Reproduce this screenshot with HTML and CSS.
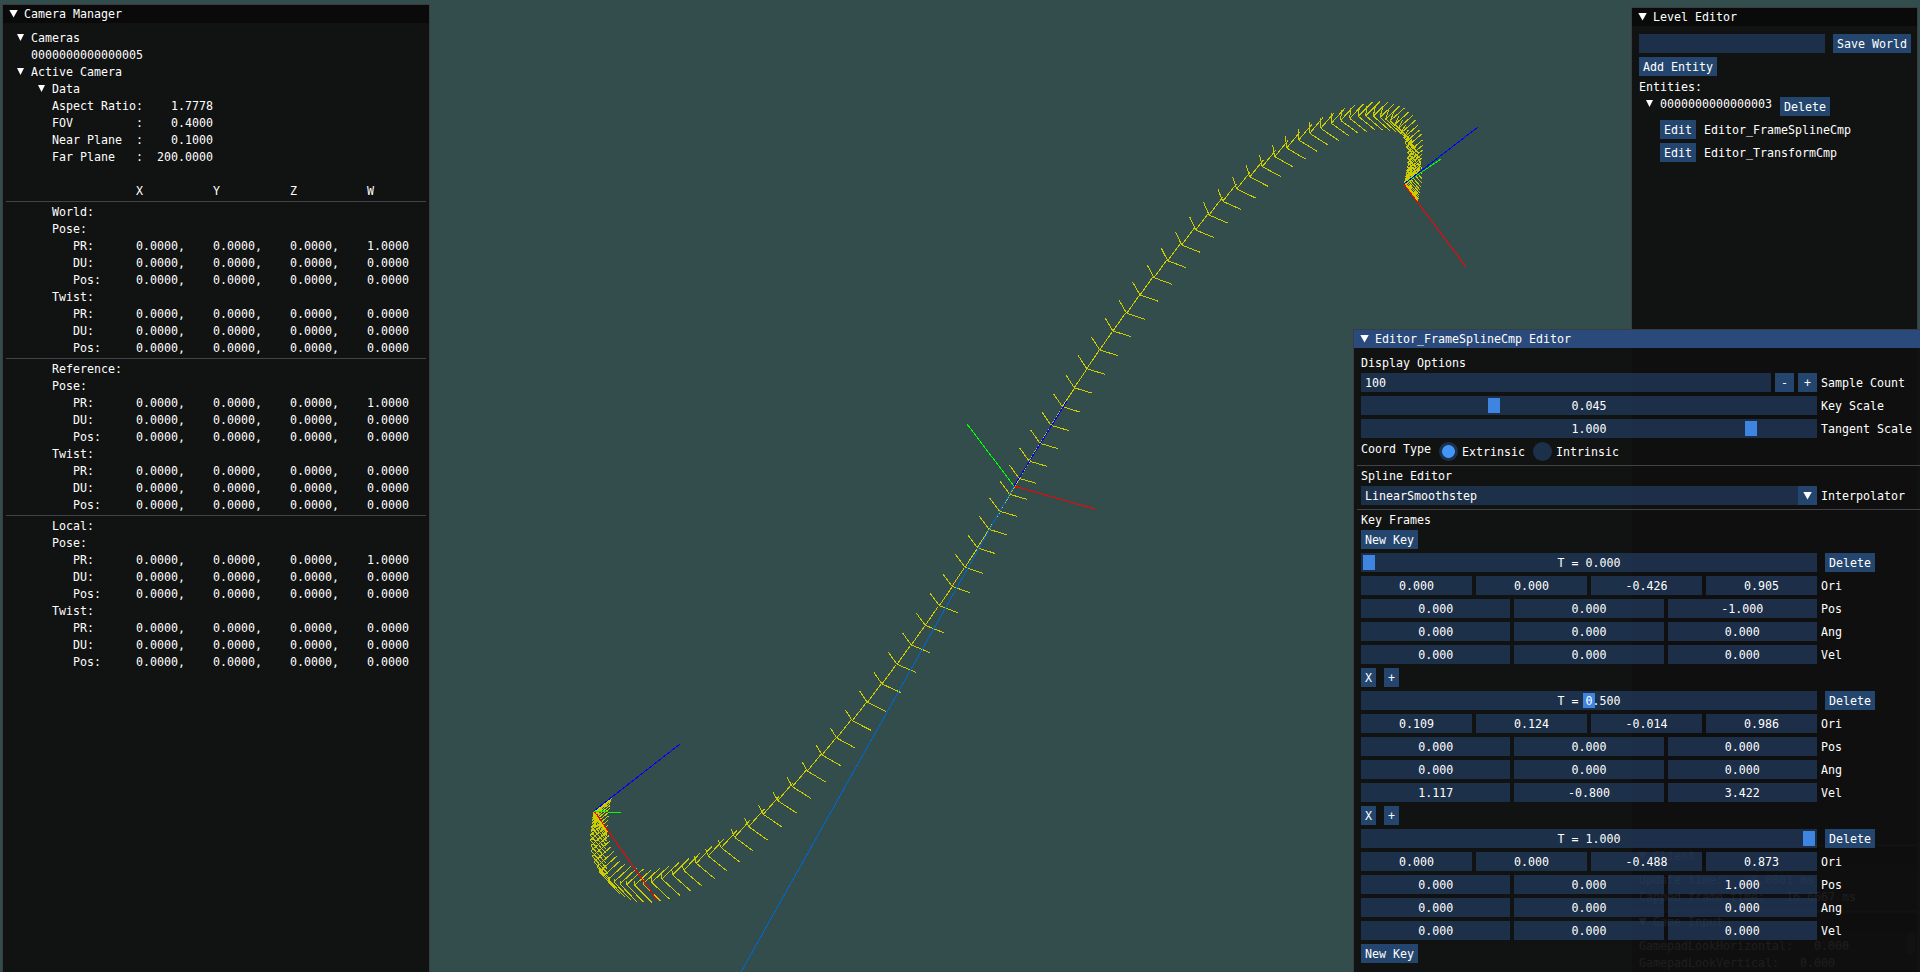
FILE: index.html
```
<!DOCTYPE html>
<html lang="en">
<head>
<meta charset="utf-8">
<title>Spline Editor</title>
<link rel="stylesheet" href="styles.css">
</head>
<body>
<svg class="viewport" width="1920" height="972" viewBox="0 0 1920 972">
  <path id="samples" class="line yellow"/>
  <path class="line guide" d="M1014 486L741 972"/>
  <path class="line red" d="M1014 486L1095 509M1404 184L1466 267M594 811L657 900"/>
  <path class="line green" d="M1014 486L967 424M1404 184L1441 159M594 811.5L621 812.5"/>
  <path class="line blue" d="M1014 486L1067 401M1404 184L1478 127M594 811L680 744"/>
</svg>

<section class="window camera">
  <header class="title"><i class="arrow"></i>Camera Manager</header>
  <div class="body">
    <div class="text tree"><i class="arrow small"></i>Cameras</div>
    <div class="text in1">0000000000000005</div>
    <div class="text tree"><i class="arrow small"></i>Active Camera</div>
    <div class="text tree in1"><i class="arrow small"></i>Data</div>
    <pre class="block in2">Aspect Ratio:    1.7778
FOV         :    0.4000
Near Plane  :    0.1000
Far Plane   :  200.0000

            X          Y          Z          W</pre>
    <hr>
    <pre class="block in2">World:
Pose:
   PR:      0.0000,    0.0000,    0.0000,    1.0000
   DU:      0.0000,    0.0000,    0.0000,    0.0000
   Pos:     0.0000,    0.0000,    0.0000,    0.0000
Twist:
   PR:      0.0000,    0.0000,    0.0000,    0.0000
   DU:      0.0000,    0.0000,    0.0000,    0.0000
   Pos:     0.0000,    0.0000,    0.0000,    0.0000</pre>
    <hr>
    <pre class="block in2">Reference:
Pose:
   PR:      0.0000,    0.0000,    0.0000,    1.0000
   DU:      0.0000,    0.0000,    0.0000,    0.0000
   Pos:     0.0000,    0.0000,    0.0000,    0.0000
Twist:
   PR:      0.0000,    0.0000,    0.0000,    0.0000
   DU:      0.0000,    0.0000,    0.0000,    0.0000
   Pos:     0.0000,    0.0000,    0.0000,    0.0000</pre>
    <hr>
    <pre class="block in2">Local:
Pose:
   PR:      0.0000,    0.0000,    0.0000,    1.0000
   DU:      0.0000,    0.0000,    0.0000,    0.0000
   Pos:     0.0000,    0.0000,    0.0000,    0.0000
Twist:
   PR:      0.0000,    0.0000,    0.0000,    0.0000
   DU:      0.0000,    0.0000,    0.0000,    0.0000
   Pos:     0.0000,    0.0000,    0.0000,    0.0000</pre>
  </div>
</section>

<section class="window level">
  <header class="title"><i class="arrow"></i>Level Editor</header>
  <div class="body">
    <div class="row wide"><span class="frame world-name"></span><span class="button">Save World</span></div>
    <div class="row"><span class="button">Add Entity</span></div>
    <div class="text">Entities:</div>
    <div class="row wide tree top"><i class="arrow small"></i><span class="plain">0000000000000003</span><span class="button">Delete</span></div>
    <div class="row wide in1"><span class="button">Edit</span><span class="label">Editor_FrameSplineCmp</span></div>
    <div class="row wide in1"><span class="button">Edit</span><span class="label">Editor_TransformCmp</span></div>
  </div>
</section>

<section class="window client">
  <header class="title"><i class="arrow"></i>Client</header>
  <div class="body"><pre class="block">Update time:    0.0001 ms
Capped frame time:   16.6667 ms</pre></div>
</section>

<section class="window input">
  <header class="title"><i class="arrow"></i>Game Input</header>
  <div class="body"><pre class="block">GamepadLookHorizontal:   0.000
GamepadLookVertical:   0.000</pre></div>
  <i class="scroll"></i>
</section>

<section class="window editor">
  <header class="title"><i class="arrow"></i>Editor_FrameSplineCmp Editor</header>
  <div class="body">
    <div class="text">Display Options</div>
    <div class="row"><span class="fields"><span class="frame value">100</span><span class="button square">-</span><span class="button square">+</span></span><span class="label">Sample Count</span></div>
    <div class="row"><span class="frame slider"><i class="grab" style="left:127px"></i><b>0.045</b></span><span class="label">Key Scale</span></div>
    <div class="row"><span class="frame slider"><i class="grab" style="left:384px"></i><b>1.000</b></span><span class="label">Tangent Scale</span></div>
    <div class="row top"><span class="plain coord">Coord Type</span><i class="radio on"></i><span class="label option">Extrinsic</span><i class="radio"></i><span class="label">Intrinsic</span></div>
    <hr>
    <div class="text">Spline Editor</div>
    <div class="row"><span class="fields combo"><span class="frame value">LinearSmoothstep</span><span class="button square"><i class="arrow"></i></span></span><span class="label">Interpolator</span></div>
    <hr>
    <div class="text">Key Frames</div>
    <div class="row"><span class="button">New Key</span></div>

    <div class="row wide"><span class="frame slider"><i class="grab" style="left:2px"></i><b>T = 0.000</b></span><span class="button">Delete</span></div>
    <div class="row"><span class="fields"><span class="frame">0.000</span><span class="frame">0.000</span><span class="frame">-0.426</span><span class="frame">0.905</span></span><span class="label">Ori</span></div>
    <div class="row"><span class="fields"><span class="frame">0.000</span><span class="frame">0.000</span><span class="frame">-1.000</span></span><span class="label">Pos</span></div>
    <div class="row"><span class="fields"><span class="frame">0.000</span><span class="frame">0.000</span><span class="frame">0.000</span></span><span class="label">Ang</span></div>
    <div class="row"><span class="fields"><span class="frame">0.000</span><span class="frame">0.000</span><span class="frame">0.000</span></span><span class="label">Vel</span></div>
    <div class="row wide"><span class="button">X</span><span class="button">+</span></div>

    <div class="row wide"><span class="frame slider"><i class="grab" style="left:222px"></i><b>T = 0.500</b></span><span class="button">Delete</span></div>
    <div class="row"><span class="fields"><span class="frame">0.109</span><span class="frame">0.124</span><span class="frame">-0.014</span><span class="frame">0.986</span></span><span class="label">Ori</span></div>
    <div class="row"><span class="fields"><span class="frame">0.000</span><span class="frame">0.000</span><span class="frame">0.000</span></span><span class="label">Pos</span></div>
    <div class="row"><span class="fields"><span class="frame">0.000</span><span class="frame">0.000</span><span class="frame">0.000</span></span><span class="label">Ang</span></div>
    <div class="row"><span class="fields"><span class="frame">1.117</span><span class="frame">-0.800</span><span class="frame">3.422</span></span><span class="label">Vel</span></div>
    <div class="row wide"><span class="button">X</span><span class="button">+</span></div>

    <div class="row wide"><span class="frame slider"><i class="grab" style="left:442px"></i><b>T = 1.000</b></span><span class="button">Delete</span></div>
    <div class="row"><span class="fields"><span class="frame">0.000</span><span class="frame">0.000</span><span class="frame">-0.488</span><span class="frame">0.873</span></span><span class="label">Ori</span></div>
    <div class="row"><span class="fields"><span class="frame">0.000</span><span class="frame">0.000</span><span class="frame">1.000</span></span><span class="label">Pos</span></div>
    <div class="row"><span class="fields"><span class="frame">0.000</span><span class="frame">0.000</span><span class="frame">0.000</span></span><span class="label">Ang</span></div>
    <div class="row"><span class="fields"><span class="frame">0.000</span><span class="frame">0.000</span><span class="frame">0.000</span></span><span class="label">Vel</span></div>
    <div class="row"><span class="button">New Key</span></div>
  </div>
</section>
<script src="spline.js"></script>
</body>
</html>
```
FILE: styles.css
```
* { box-sizing: border-box; }

body {
  margin: 0;
  width: 1920px;
  height: 972px;
  overflow: hidden;
  position: relative;
  background: #334c4c;
  color: #fff;
  font: 11.63px/13px "DejaVu Sans Mono", monospace;
}

.viewport { display: block; }
.line { fill: none; stroke-width: 1; shape-rendering: crispEdges; }
.yellow { stroke: #cccc00; }
.red { stroke: #ff0000; }
.green { stroke: #00ff00; }
.blue { stroke: #0000ff; }
.guide { stroke: #0066cc; }

.window {
  position: absolute;
  display: flex;
  flex-direction: column;
  overflow: hidden;
  background: rgba(15, 15, 15, .94);
  border: 1px solid rgba(110, 110, 128, .45);
  white-space: pre;
}
.camera { left: 2px; top: 4px; width: 428px; height: 980px; }
.level { left: 1631px; top: 7px; width: 287px; height: 838px; }
.client { left: 1631px; top: 846px; width: 287px; height: 65px; }
.input { left: 1631px; top: 912px; width: 287px; height: 80px; }
.editor { left: 1353px; top: 329px; width: 600px; height: 660px; }

.title {
  display: flex;
  flex: none;
  align-items: center;
  gap: 6px;
  height: 18px;
  padding: 0 0 0 6px;
  background: #0a0a0a;
}
.editor .title { background: #294a7a; }

.body {
  display: flex;
  flex: none;
  flex-direction: column;
  gap: 4px;
  padding: 8px 7px;
}

.arrow {
  flex: none;
  width: 9px;
  height: 8px;
  background: #fff;
  clip-path: polygon(0 0, 100% 0, 50% 100%);
}
.arrow.small { width: 7px; height: 7px; }
.title .arrow { margin-bottom: 1px; }

.text { height: 13px; line-height: 15px; }
.block { margin: -1px 0 -3px; font: inherit; line-height: 17px; }
.in1 { margin-left: 21px; }
.in2 { margin-left: 42px; }
.tree { display: flex; align-items: center; gap: 7px; padding-left: 7px; }
.text.tree { align-items: flex-start; }
.text.tree .arrow { margin-top: 3px; }

hr {
  width: auto;
  height: 1px;
  margin: 0 -4px -1px;
  border: 0;
  background: #42424a;
}
.editor hr { margin-right: -8px; }

.row { display: flex; align-items: center; gap: 4px; height: 19px; }
.row.wide { gap: 8px; }
.row.top .plain, .row.top .arrow { align-self: flex-start; }
.row.top .plain { line-height: 15px; }
.row.top .arrow { margin-top: 3px; }
.row.top.tree .plain { margin-left: -1px; }
.label { padding-top: 2px; }

.frame, .button {
  display: flex;
  flex: none;
  align-items: center;
  justify-content: center;
  height: 19px;
  padding: 2px 0 0;
  background: rgba(41, 74, 122, .54);
}
.button { padding: 2px 4px 0; background: #24466e; }
.button.square { width: 19px; padding: 2px 0 0; }
.world-name { width: 186px; }

.fields { display: flex; flex: none; gap: 4px; width: 456px; }
.fields .frame { flex: 1; }
.fields .frame.value { justify-content: flex-start; padding-left: 4px; }
.fields.combo { gap: 0; }
.combo .arrow { margin-bottom: 2px; }

.slider { position: relative; width: 456px; }
.slider b { position: relative; font-weight: normal; }
.grab {
  position: absolute;
  top: 2px;
  width: 12px;
  height: 15px;
  background: #3d85e0;
}

.coord { margin-right: 4px; }
.option { margin-right: 4px; }
.radio {
  flex: none;
  width: 19px;
  height: 19px;
  border-radius: 50%;
  background: #1d3049;
}
.radio.on { background: radial-gradient(circle, #4296fa 6px, #1d3049 6.8px); }

.scroll {
  position: absolute;
  right: 2px;
  top: 21px;
  width: 9px;
  height: 20px;
  border-radius: 4px;
  background: #4f4f4f;
}
```
FILE: spline.js
```
// Sample origins per patch: [offsetX, offsetY, [x, y, ...]] in thirds of a pixel.
const patches = [
  [560, 700, [101,335,101,337,100,341,99,346,98,352,97,360,96,369,94,380,92,392,91,405,91,420,92,437,
    93,452,97,469,102,485,110,500,118,515,130,528,145,538,162,546,180,552,200,554,224,556,249,552,
    275,547,306,537,338,525,371,511,409,490,445,468,484,443,524,412,566,380,610,343,653,302,697,260,
    742,213,786,165]],
  [780, 500, [170,714,217,662,262,607,306,552,351,493,394,435,436,376,478,317,516,259,555,202,592,143,
    627,88,659,34]],
  [900, 380, [329,343,357,295,387,243,420,190,453,136,487,80]],
  [1020, 160, [163,683,200,626,239,570,279,513,320,460,360,405,402,353,443,302,485,255,527,210,567,165,
    608,124,650,87]],
  [1200, 80, [149,291,187,260,224,230,260,204,296,180,329,160,362,145,394,130,422,121,449,115,475,109,
    497,107,520,108,540,112,557,117,571,122,585,133,595,145,603,159,611,173,615,188,620,201,623,218,
    623,234,623,248,622,260,620,272,618,281,617,289,616,296,615,301,614,306,613,309,613,311,613,313]]
];

const points = [];
for (const [ox, oy, list] of patches) {
  for (let i = 0; i < list.length; i += 2) points.push([ox + list[i] / 3, oy + list[i + 1] / 3]);
}

// Frame axes keyed by sample index: [index, x-axis, y-axis, z-axis].
const last = points.length - 1;
const axes = [
  [0, 41,57, 17,1, 54,-43],
  [12, 47,53, 10,-5, 53,-45],
  [20, 50,53, 1,-8, 50,-47],
  [24, 53,50, 0,-17, 51,-48],
  [28, 55,46, -7,-21, 47,-51],
  [33, 56,38, -14,-27, 47,-54],
  [37, 56,32, -17,-29, 44,-54],
  [42, 56,24, -26,-36, 40,-56],
  [50, 52,15, -30,-40, 34,-55],
  [60, 55,17, -24,-39, 38,-55],
  [68, 56,25, -15,-38, 41,-52],
  [75, 56,36, 0,-33, 40,-47],
  [81, 50,43, 4,-28, 43,-42],
  [86, 45,45, 12,-25, 43,-38],
  [last, 40,51, 23,-16, 47,-38]
];

function axesAt(i) {
  let k = 0;
  while (k < axes.length - 2 && axes[k + 1][0] <= i) k++;
  const a = axes[k], b = axes[k + 1];
  const t = (i - a[0]) / (b[0] - a[0]);
  return a.slice(1).map((v, n) => v + (b[n + 1] - v) * t);
}

let d = "";
points.forEach(([x, y], i) => {
  const v = axesAt(i);
  for (let n = 0; n < 6; n += 2) {
    d += `M${x.toFixed(1)} ${y.toFixed(1)}l${(v[n] / 3).toFixed(1)} ${(v[n + 1] / 3).toFixed(1)}`;
  }
});
document.getElementById("samples").setAttribute("d", d);
```
